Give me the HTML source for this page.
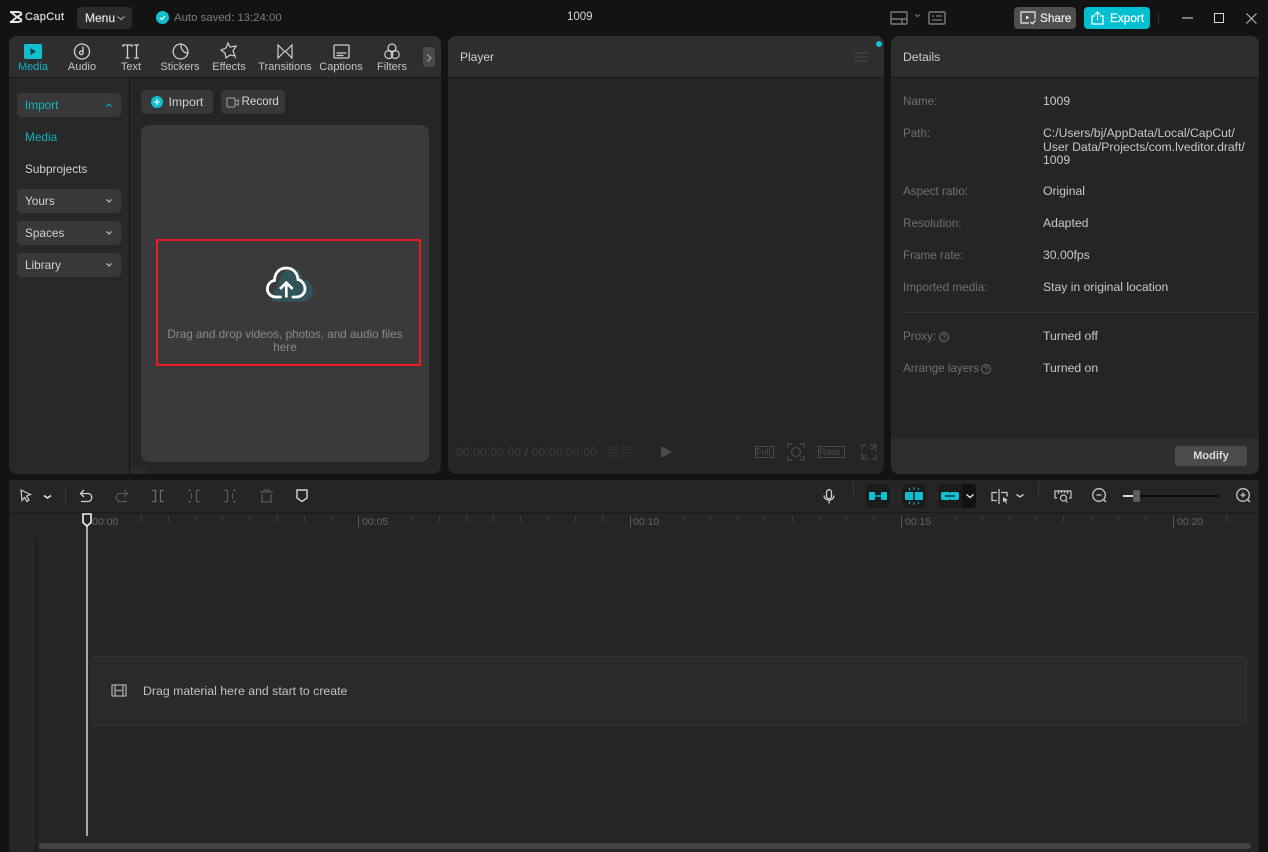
<!DOCTYPE html>
<html><head><meta charset="utf-8"><style>
html,body{margin:0;padding:0;background:#131313}
#r{position:relative;width:1268px;height:852px;overflow:hidden;background:#131313;font-family:"Liberation Sans",sans-serif;font-size:11px;color:#d4d4d4}
#r div,#r span.t,#r svg{position:absolute}
.t{position:absolute;white-space:nowrap;line-height:14px}
.p{background:#252525}
.h{background:#2e2e2e}
.lab{color:#6f6f6f;font-size:11.7px}
.val{color:#c8c8c8;font-size:12.2px}
.tab{font-size:11px;color:#c4c4c4;text-align:center;width:70px}
.side{font-size:11.8px;color:#d2d2d2}
.btn{background:#383838;border-radius:4px}
svg{overflow:visible}
</style></head><body><div id="r">

<!-- title bar -->
<svg style="left:9px;top:11px" width="14" height="12" viewBox="0 0 14 12"><path d="M1 1h8l4 1M1 11h8l4-1M2 1l6 5-6 5M13 3L8 6l5 3" fill="none" stroke="#e8e8e8" stroke-width="1.900"/></svg>
<span class="t" style="left:25px;top:10px;font-size:11px;color:#ddd;letter-spacing:.35px;-webkit-text-stroke:.2px #ddd">CapCut</span>
<div class="btn" style="left:77px;top:7px;width:55px;height:22px;background:#2b2b2b"></div>
<span class="t" style="left:85px;top:10.500px;font-size:12px;color:#ddd;-webkit-text-stroke:.25px #ddd">Menu</span>
<svg style="left:117px;top:16px" width="8" height="5"><path d="M.5.500l3.500 3 3.500-3" fill="none" stroke="#999" stroke-width="1.200"/></svg>
<svg style="left:156px;top:11px" width="13" height="13" viewBox="0 0 13 13"><circle cx="6.500" cy="6.500" r="6.500" fill="#10bfd0"/><path d="M4 6.800l2 1.700 3-3.500" fill="none" stroke="#fff" stroke-width="1.100"/></svg>
<span class="t" style="left:174px;top:10.500px;font-size:11.400px;color:#7d7d7d">Auto saved: 13:24:00</span>
<span class="t" style="left:567px;top:10px;font-size:11.500px;color:#d8d8d8">1009</span>

<svg style="left:890px;top:11px" width="58" height="14" viewBox="0 0 58 14" fill="none" stroke="#7a7a7a" stroke-width="1.400"><rect x="1" y="1" width="16" height="12" rx="1"/><path d="M1 8h16M12 8v5"/><path d="M25 3.500l2.500 2 2.500-2" stroke-width="1.100"/><rect x="39" y="1" width="16" height="12" rx="1"/><path d="M42 5h2M46 5h6M42 9h10" stroke-width="1.200"/></svg>

<div style="left:1014px;top:7px;width:62px;height:22px;background:#4f4f4f;border-radius:4px"></div>
<svg style="left:1020px;top:11px" width="16" height="14" viewBox="0 0 16 14" fill="none" stroke="#eee" stroke-width="1.200"><path d="M9 12H1V1h14v7"/><path d="M6 4.500l3.500 2-3.500 2z" fill="#eee" stroke="none"/><path d="M10.500 11l2 1.800 3-3.500"/></svg>
<span class="t" style="left:1040px;top:10.500px;font-size:11.800px;color:#e6e6e6;-webkit-text-stroke:.25px #e6e6e6">Share</span>
<div style="left:1084px;top:7px;width:66px;height:22px;background:#00bfd0;border-radius:4px"></div>
<svg style="left:1091px;top:11px" width="13" height="14" viewBox="0 0 13 14" fill="none" stroke="#fff" stroke-width="1.200"><path d="M4 5H1v8h11V5H9M6.500 9V1M4 3.500L6.500 1 9 3.500"/></svg>
<span class="t" style="left:1110px;top:10.500px;font-size:11.800px;color:#fff;-webkit-text-stroke:.25px #fff">Export</span>
<div style="left:1158px;top:12px;width:1px;height:12px;background:#333"></div>
<div style="left:1182px;top:17px;width:11px;height:2px;background:#7a7a7a"></div>
<div style="left:1214px;top:13px;width:8px;height:8px;border:1.500px solid #d6d6d6"></div>
<svg style="left:1246px;top:13px" width="11" height="11"><path d="M.5.500l10 10M10.500.500l-10 10" stroke="#b5b5b5" stroke-width="1.200"/></svg>

<!-- media panel -->
<div class="p" style="left:9px;top:36px;width:432px;height:438px;border-radius:8px;overflow:hidden">
 <div class="h" style="left:0;top:0;width:432px;height:41px"></div>
 <div style="left:0;top:41px;width:432px;height:1px;background:#1a1a1a"></div>
 <div style="left:0;top:42px;width:120px;height:396px;background:#282828"></div>
 <div style="left:120px;top:42px;width:1px;height:396px;background:#111"></div>
</div>
<div style="left:130px;top:468px;width:17px;height:6px;background:#2b2b2b"></div>

<svg style="left:24px;top:44px" width="18" height="15" viewBox="0 0 18 15"><rect width="18" height="15" rx="1.500" fill="#10bfd0"/><path d="M6.500 4l5.500 3.500-5.500 3.500z" fill="#1c3c42"/></svg>
<svg style="left:73px;top:43px" width="18" height="17" viewBox="0 0 18 17" fill="none" stroke="#cfcfcf" stroke-width="1.300"><circle cx="9" cy="8.500" r="7.500"/><path d="M10 3.500v6"/><circle cx="8.300" cy="9.800" r="1.800"/></svg>
<svg style="left:122px;top:44px" width="18" height="15" viewBox="0 0 18 15" fill="none" stroke="#cfcfcf" stroke-width="1.300"><path d="M1 3V1h9v2M5.500 1v13M3.500 14h4M12 1h5M14.500 1v13M12 14h5"/></svg>
<svg style="left:172px;top:43px" width="17" height="17" viewBox="0 0 17 17" fill="none" stroke="#cfcfcf" stroke-width="1.300"><path d="M9 1a7.500 7.500 0 1 0 7 9c-4 .5-7.500-4-7-9zM9 1c4 .5 7 4 7 9"/></svg>
<svg style="left:220px;top:42px" width="18" height="18" viewBox="0 0 18 18" fill="none" stroke="#cfcfcf" stroke-width="1.200"><path d="M8 1l2 4 6-1-3 5 2 5-5-1-4 3-1-5-4-3 5-2z"/><path d="M15 15l1 1"/></svg>
<svg style="left:277px;top:44px" width="16" height="15" viewBox="0 0 16 15" fill="none" stroke="#cfcfcf" stroke-width="1.200"><path d="M1 1v13l6.500-6.500zM15 1v13L8.500 7.500z"/></svg>
<svg style="left:333px;top:44px" width="17" height="15" viewBox="0 0 17 15" fill="none" stroke="#cfcfcf" stroke-width="1.300"><rect x="1" y="1" width="15" height="13" rx="1"/><path d="M3.500 9h10M3.500 11.500h7" /></svg>
<svg style="left:384px;top:43px" width="16" height="17" viewBox="0 0 16 17" fill="none" stroke="#cfcfcf" stroke-width="1.200"><circle cx="8" cy="5" r="4"/><circle cx="4.800" cy="11.500" r="4"/><circle cx="11.200" cy="11.500" r="4"/></svg>

<span class="t tab" style="left:-2px;top:60px;color:#10b4c4">Media</span>
<span class="t tab" style="left:47px;top:60px">Audio</span>
<span class="t tab" style="left:96px;top:60px">Text</span>
<span class="t tab" style="left:145px;top:60px">Stickers</span>
<span class="t tab" style="left:194px;top:60px">Effects</span>
<span class="t tab" style="left:250px;top:60px">Transitions</span>
<span class="t tab" style="left:306px;top:60px">Captions</span>
<span class="t tab" style="left:357px;top:60px">Filters</span>
<div style="left:423px;top:47px;width:12px;height:20px;background:#4a4a4a;border-radius:3px"></div>
<svg style="left:427px;top:54px" width="5" height="8"><path d="M.5.500L4 4 .5 7.500" fill="none" stroke="#aaa" stroke-width="1.100"/></svg>

<!-- sidebar -->
<div class="btn" style="left:17px;top:93px;width:104px;height:24px"></div>
<span class="t side" style="left:25px;top:98px;color:#10b4c4">Import</span>
<svg style="left:106px;top:103px" width="6" height="4"><path d="M.5 3.500L3 1l2.500 2.500" fill="none" stroke="#10b4c4" stroke-width="1.100"/></svg>
<span class="t side" style="left:25px;top:130px;color:#10b0bd">Media</span>
<span class="t side" style="left:25px;top:162px">Subprojects</span>
<div class="btn" style="left:17px;top:189px;width:104px;height:24px"></div>
<span class="t side" style="left:25px;top:194px">Yours</span>
<svg style="left:106px;top:199px" width="6" height="4"><path d="M.5.500L3 3 5.500.500" fill="none" stroke="#ccc" stroke-width="1.100"/></svg>
<div class="btn" style="left:17px;top:221px;width:104px;height:24px"></div>
<span class="t side" style="left:25px;top:226px">Spaces</span>
<svg style="left:106px;top:231px" width="6" height="4"><path d="M.5.500L3 3 5.500.500" fill="none" stroke="#ccc" stroke-width="1.100"/></svg>
<div class="btn" style="left:17px;top:253px;width:104px;height:24px"></div>
<span class="t side" style="left:25px;top:258px">Library</span>
<svg style="left:106px;top:263px" width="6" height="4"><path d="M.5.500L3 3 5.500.500" fill="none" stroke="#ccc" stroke-width="1.100"/></svg>

<!-- media buttons -->
<div class="btn" style="left:141px;top:90px;width:72px;height:24px"></div>
<svg style="left:151px;top:96px" width="12" height="12" viewBox="0 0 12 12"><circle cx="6" cy="6" r="6" fill="#10bfd0"/><path d="M6 3v6M3 6h6" stroke="#fff" stroke-width="1.100"/></svg>
<span class="t" style="left:168.500px;top:94.500px;font-size:12.300px;color:#d2d2d2">Import</span>
<div class="btn" style="left:221px;top:90px;width:64px;height:24px"></div>
<svg style="left:226px;top:97px" width="13" height="11" viewBox="0 0 13 11" fill="none" stroke="#8f8f8f" stroke-width="1.200"><rect x="1" y="1" width="8" height="9" rx="1"/><path d="M9.500 4l3-1v5l-3-1"/></svg>
<span class="t" style="left:241.500px;top:94.500px;font-size:11.600px;color:#d8d8d8">Record</span>

<!-- drop area -->
<div style="left:141px;top:125px;width:288px;height:337px;background:#3a3a3a;border-radius:8px"></div>
<div style="left:156px;top:239px;width:261px;height:123px;border:2px solid #ed1c24"></div>
<svg style="left:265px;top:265px" width="50" height="40" viewBox="0 0 50 40"><path d="M7.500 36.500C6.500 30 9 24 13 22C14 10 19 3 26 3C32 3 36 7 38 14C44 15 47.700 20 47.700 26C47.700 32 43 36.500 38 36.500Z" fill="#31545a"/><path d="M15.500 32H11C6 32 2.400 28.500 2.400 24C2.400 19.500 5.500 16 9.500 15.500C9.500 8 14.500 3 21.300 3C28 3 32.500 8 33 14.500C37 15.500 40 19.500 40 24C40 28.500 36 32 31.500 32H28" fill="none" stroke="#fff" stroke-width="2.800" stroke-linecap="round"/><path d="M21.300 32.500V18M15 24l6.300-6.300 6.300 6.300" fill="none" stroke="#fff" stroke-width="2.700"/></svg>
<span class="t" style="left:141px;width:288px;text-align:center;top:328px;font-size:11.700px;color:#8a8a8a;line-height:13px;white-space:normal">Drag and drop videos, photos, and audio files<br>here</span>

<!-- player -->
<div class="p" style="left:448px;top:36px;width:436px;height:438px;border-radius:8px;overflow:hidden">
 <div class="h" style="left:0;top:0;width:436px;height:41px"></div>
 <div style="left:0;top:41px;width:436px;height:1px;background:#1a1a1a"></div>
</div>
<span class="t" style="left:460px;top:50px;font-size:12px;color:#cfcfcf">Player</span>
<svg style="left:854px;top:52px" width="14" height="10"><path d="M0 1h14M0 5h14M0 9h14" stroke="#444" stroke-width="1.300"/></svg>
<div style="left:876px;top:41px;width:6px;height:6px;border-radius:50%;background:#10bfd0"></div>
<span class="t" style="left:456px;top:445px;font-size:12px;color:#3c3c3c;letter-spacing:.17px">00:00:00:00 <span style="color:#4a4a4a">/</span> 00:00:00:00</span>
<svg style="left:608px;top:446px" width="23" height="12"><path d="M0 1h10M13 1h10M0 4h10M13 4h10M0 7h10M13 7h10M0 10h10M13 10h10" stroke="#353535"/></svg>
<svg style="left:661px;top:446px" width="11" height="12"><path d="M0 0l11 6-11 6z" fill="#4d4d4d"/></svg>
<div style="left:755px;top:446px;width:17px;height:10px;border:1px solid #4a4a4a"></div>
<span class="t" style="left:756px;top:445px;font-size:9px;color:#4a4a4a">Full</span>
<svg style="left:788px;top:444px" width="16" height="16" fill="none" stroke="#4a4a4a" stroke-width="1.200"><path d="M0 4V0h4M12 0h4v4M0 12v4h4M16 12v4h-4"/><circle cx="8" cy="8" r="4.500"/><path d="M11 11l2 2"/></svg>
<div style="left:818px;top:446px;width:25px;height:10px;border:1px solid #4a4a4a"></div>
<span class="t" style="left:819.500px;top:445px;font-size:9px;color:#4a4a4a">Ratio</span>
<svg style="left:862px;top:445px" width="14" height="14" fill="none" stroke="#4a4a4a" stroke-width="1.200"><path d="M8 0h6v6M14 0L9 5M6 14H0V8M0 14l5-5M0 4V0h4M14 10v4h-4"/></svg>

<!-- details -->
<div class="p" style="left:891px;top:36px;width:368px;height:438px;border-radius:8px;overflow:hidden">
 <div class="h" style="left:0;top:0;width:368px;height:41px"></div>
 <div style="left:0;top:41px;width:368px;height:1px;background:#1a1a1a"></div>
 <div class="h" style="left:0;top:402px;width:368px;height:36px"></div>
 <div style="left:12px;top:276px;width:356px;height:1px;background:#363636"></div>
</div>
<span class="t" style="left:903px;top:50px;font-size:12.200px;color:#c9c9c9">Details</span>
<span class="t lab" style="left:903px;top:95px">Name:</span>
<span class="t val" style="left:1043px;top:94px">1009</span>
<span class="t lab" style="left:903px;top:127px">Path:</span>
<span class="t val" style="left:1043px;top:127px;line-height:13.500px;white-space:normal;width:220px">C:/Users/bj/AppData/Local/CapCut/<br>User Data/Projects/com.lveditor.draft/<br>1009</span>
<span class="t lab" style="left:903px;top:185px">Aspect ratio:</span>
<span class="t val" style="left:1043px;top:184px">Original</span>
<span class="t lab" style="left:903px;top:217px">Resolution:</span>
<span class="t val" style="left:1043px;top:216px">Adapted</span>
<span class="t lab" style="left:903px;top:249px">Frame rate:</span>
<span class="t val" style="left:1043px;top:248px">30.00fps</span>
<span class="t lab" style="left:903px;top:281px">Imported media:</span>
<span class="t val" style="left:1043px;top:280px">Stay in original location</span>
<span class="t lab" style="left:903px;top:330px">Proxy:</span>
<svg style="left:939px;top:332px" width="10" height="10" fill="none" stroke="#6f6f6f"><circle cx="5" cy="5" r="4.500"/><path d="M3.500 4c0-2 3-2 3 0 0 1-1.500 1-1.500 2M5 7v1" stroke-width=".8"/></svg>
<span class="t val" style="left:1043px;top:329px">Turned off</span>
<span class="t lab" style="left:903px;top:362px">Arrange layers</span>
<svg style="left:981px;top:364px" width="10" height="10" fill="none" stroke="#6f6f6f"><circle cx="5" cy="5" r="4.500"/><path d="M3.500 4c0-2 3-2 3 0 0 1-1.500 1-1.500 2M5 7v1" stroke-width=".8"/></svg>
<span class="t val" style="left:1043px;top:361px">Turned on</span>
<div style="left:1175px;top:446px;width:72px;height:20px;background:#4b4b4b;border-radius:3px"></div>
<span class="t" style="left:1175px;width:72px;text-align:center;top:448.500px;font-size:11px;font-weight:bold;color:#dcdcdc">Modify</span>

<!-- timeline -->
<div style="left:9px;top:480px;width:1250px;height:372px;background:#252525"></div>
<div style="left:9px;top:512px;width:1250px;height:1px;background:#1b1b1b"></div>
<div style="left:36px;top:540px;width:1px;height:312px;background:#151515"></div>

<svg style="left:20px;top:489px" width="32" height="15" fill="none" stroke="#cfcfcf" stroke-width="1.200"><path d="M1 1l9.500 4.500-4 1.500 2.500 4-2 1.500-2.500-4-2.500 3z"/><path d="M24 6.500l3.500 2.500 3.500-2.500" stroke="#eee" stroke-width="1.500"/></svg>
<div style="left:65px;top:488px;width:1px;height:16px;background:#3a3a3a"></div>
<svg style="left:79px;top:489px" width="14" height="14" fill="none" stroke="#d0d0d0" stroke-width="1.300"><path d="M5 1L1.500 4.500 5 8M2 4.500h7c5 0 5 8 0 8H2"/></svg>
<svg style="left:115px;top:489px" width="14" height="14" fill="none" stroke="#575757" stroke-width="1.300"><path d="M9 1l3.500 3.500L9 8M12 4.500H5c-5 0-5 8 0 8h7"/></svg>
<svg style="left:152px;top:490px" width="13" height="12" fill="none" stroke="#6a6a6a" stroke-width="1.300"><path d="M0 .5h3.500v11H0M12 .5H8.500v11H12"/></svg>
<svg style="left:188px;top:490px" width="13" height="12" fill="none" stroke="#575757" stroke-width="1.300"><path d="M0 .5h3M0 11.500h3M3.500 3v6M12 .5H8.500v11H12"/></svg>
<svg style="left:224px;top:490px" width="13" height="12" fill="none" stroke="#575757" stroke-width="1.300"><path d="M0 .5h3.500v11H0M12 .5H9M12 11.500H9M8.500 3v6"/></svg>
<svg style="left:260px;top:489px" width="13" height="14" fill="none" stroke="#575757" stroke-width="1.300"><path d="M0 3h13M4 3V1h5v2M2 5v8h9V5"/></svg>
<svg style="left:296px;top:489px" width="12" height="14" fill="none" stroke="#d5d5d5" stroke-width="1.400"><path d="M1 1h10v8l-5 3.500-5-3.500z"/></svg>

<svg style="left:823px;top:489px" width="12" height="15" fill="none" stroke="#cfcfcf" stroke-width="1.300"><rect x="3.500" y=".7" width="5" height="9" rx="2.500"/><path d="M1 6.500c0 6 10 6 10 0M6 11.500v3"/></svg>
<div style="left:853px;top:481px;width:1px;height:15px;background:#3a3a3a"></div>
<div style="left:866px;top:484px;width:24px;height:24px;background:#1b1b1b;border-radius:4px"></div>
<svg style="left:869px;top:491px" width="18" height="10"><rect x="0" y="1" width="6" height="8" rx="1" fill="#10bfd0"/><rect x="12" y="1" width="6" height="8" rx="1" fill="#10bfd0"/><path d="M6 5h6" stroke="#10bfd0" stroke-width="1.500"/></svg>
<div style="left:902px;top:484px;width:24px;height:24px;background:#1b1b1b;border-radius:4px"></div>
<svg style="left:905px;top:487px" width="18" height="18"><rect x="0" y="5" width="18" height="8" rx="1.500" fill="#10bfd0"/><path d="M9 5v8" stroke="#1b1b1b" stroke-width="1.500"/><path d="M9 0v3M9 15v3M4 1l1 2.500M14 1l-1 2.500M4 17l1-2.500M14 17l-1-2.500" stroke="#10bfd0"/></svg>
<div style="left:938px;top:484px;width:38px;height:24px;background:#1b1b1b;border-radius:4px"></div>
<div style="left:962px;top:484px;width:14px;height:24px;background:#111;border-radius:0 4px 4px 0"></div>
<svg style="left:941px;top:491px" width="18" height="10"><rect x="0" y="1" width="18" height="8" rx="2" fill="#10bfd0"/><path d="M4 5h10" stroke="#1b1b1b" stroke-width="1.300"/><path d="M9 0v2M9 8v2" stroke="#1b1b1b" stroke-width="1"/></svg>
<svg style="left:966px;top:494px" width="8" height="5"><path d="M.5.500L4 3.500 7.500.500" fill="none" stroke="#eee" stroke-width="1.400"/></svg>
<svg style="left:991px;top:489px" width="38" height="16" fill="none" stroke="#c8c8c8" stroke-width="1.300"><path d="M6 3.500H1v8h5M8 0v15M10 3.500h6v4"/><path d="M12 8l5 3-2 .7 1 2.500-1 .4-1-2.500-2 1z" fill="#ccc" stroke="none"/><path d="M25.500 5.500L29 8l3.500-2.500" stroke-width="1.400"/></svg>
<div style="left:1038px;top:481px;width:1px;height:15px;background:#3a3a3a"></div>
<svg style="left:1054px;top:489px" width="18" height="15" fill="none" stroke="#c8c8c8" stroke-width="1.200"><path d="M3 9H1V2h16v7h-2M4.500 2v3M7.500 2v2M10.500 2v2M13.500 2v3"/><circle cx="9.500" cy="9" r="3"/><path d="M11.500 11.500l2 2"/></svg>
<svg style="left:1092px;top:488px" width="15" height="15" fill="none" stroke="#c8c8c8" stroke-width="1.300"><circle cx="7" cy="7" r="6.300"/><path d="M4.500 7h5M11.500 11.500l2.500 2.500"/></svg>
<div style="left:1123px;top:495px;width:96px;height:2px;background:#0c0c0c"></div>
<div style="left:1123px;top:495px;width:10px;height:2px;background:#ddd"></div>
<div style="left:1133px;top:490px;width:7px;height:12px;background:#5c5c5c;border-radius:2px"></div>
<svg style="left:1236px;top:488px" width="15" height="15" fill="none" stroke="#c8c8c8" stroke-width="1.300"><circle cx="7" cy="7" r="6.300"/><path d="M4.500 7h5M7 4.500v5M11.500 11.500l2.500 2.500"/></svg>

<!-- ruler ticks -->
<svg style="left:0;top:513px" width="1268" height="20" stroke="#3f3f3f"><path d="M141.500 3v6M168.500 3v6M195.500 3v6M222.500 3v6M249.500 3v6M277.500 3v6M304.500 3v6M331.500 3v6M412.500 3v6M439.500 3v6M466.500 3v6M493.500 3v6M520.500 3v6M548.500 3v6M575.500 3v6M602.500 3v6M683.500 3v6M710.500 3v6M737.500 3v6M764.500 3v6M792.500 3v6M819.500 3v6M846.500 3v6M873.500 3v6M955.500 3v6M982.500 3v6M1009.500 3v6M1036.500 3v6M1063.500 3v6M1091.500 3v6M1118.500 3v6M1145.500 3v6M1226.500 3v6" /><path d="M358.500 3v11M630.500 3v11M901.500 3v11M1173.500 3v11" stroke="#5a5a5a"/></svg>
<span class="t" style="left:92px;top:515px;font-size:10.500px;color:#666">00:00</span>
<span class="t" style="left:362px;top:515px;font-size:10.500px;color:#666">00:05</span>
<span class="t" style="left:633px;top:515px;font-size:10.500px;color:#666">00:10</span>
<span class="t" style="left:905px;top:515px;font-size:10.500px;color:#666">00:15</span>
<span class="t" style="left:1177px;top:515px;font-size:10.500px;color:#666">00:20</span>

<!-- drop track -->
<div style="left:90px;top:656px;width:1155px;height:68px;background:#2a2a2a;border:1px dotted #3a3a3a;border-left-color:#2e2e2e;border-radius:6px"></div>
<svg style="left:111px;top:684px" width="16" height="13" fill="none" stroke="#9a9a9a" stroke-width="1.500"><rect x="1" y="1" width="14" height="11" rx=".5"/><path d="M4 1v11M12 1v11M4 6.500h8" /></svg>
<span class="t" style="left:143px;top:683.500px;font-size:12.300px;color:#c2c2c2">Drag material here and start to create</span>

<!-- playhead -->
<div style="left:86px;top:524px;width:2px;height:312px;background:#a8a8a8"></div>
<svg style="left:82px;top:513px" width="10" height="14"><path d="M1 1h8v8.500L5 13 1 9.500z" fill="#252525" stroke="#f0f0f0" stroke-width="1.600"/></svg>

<!-- scrollbar -->
<div style="left:39px;top:843px;width:1212px;height:6px;background:#444;border-radius:3px"></div>

</div></body></html>
